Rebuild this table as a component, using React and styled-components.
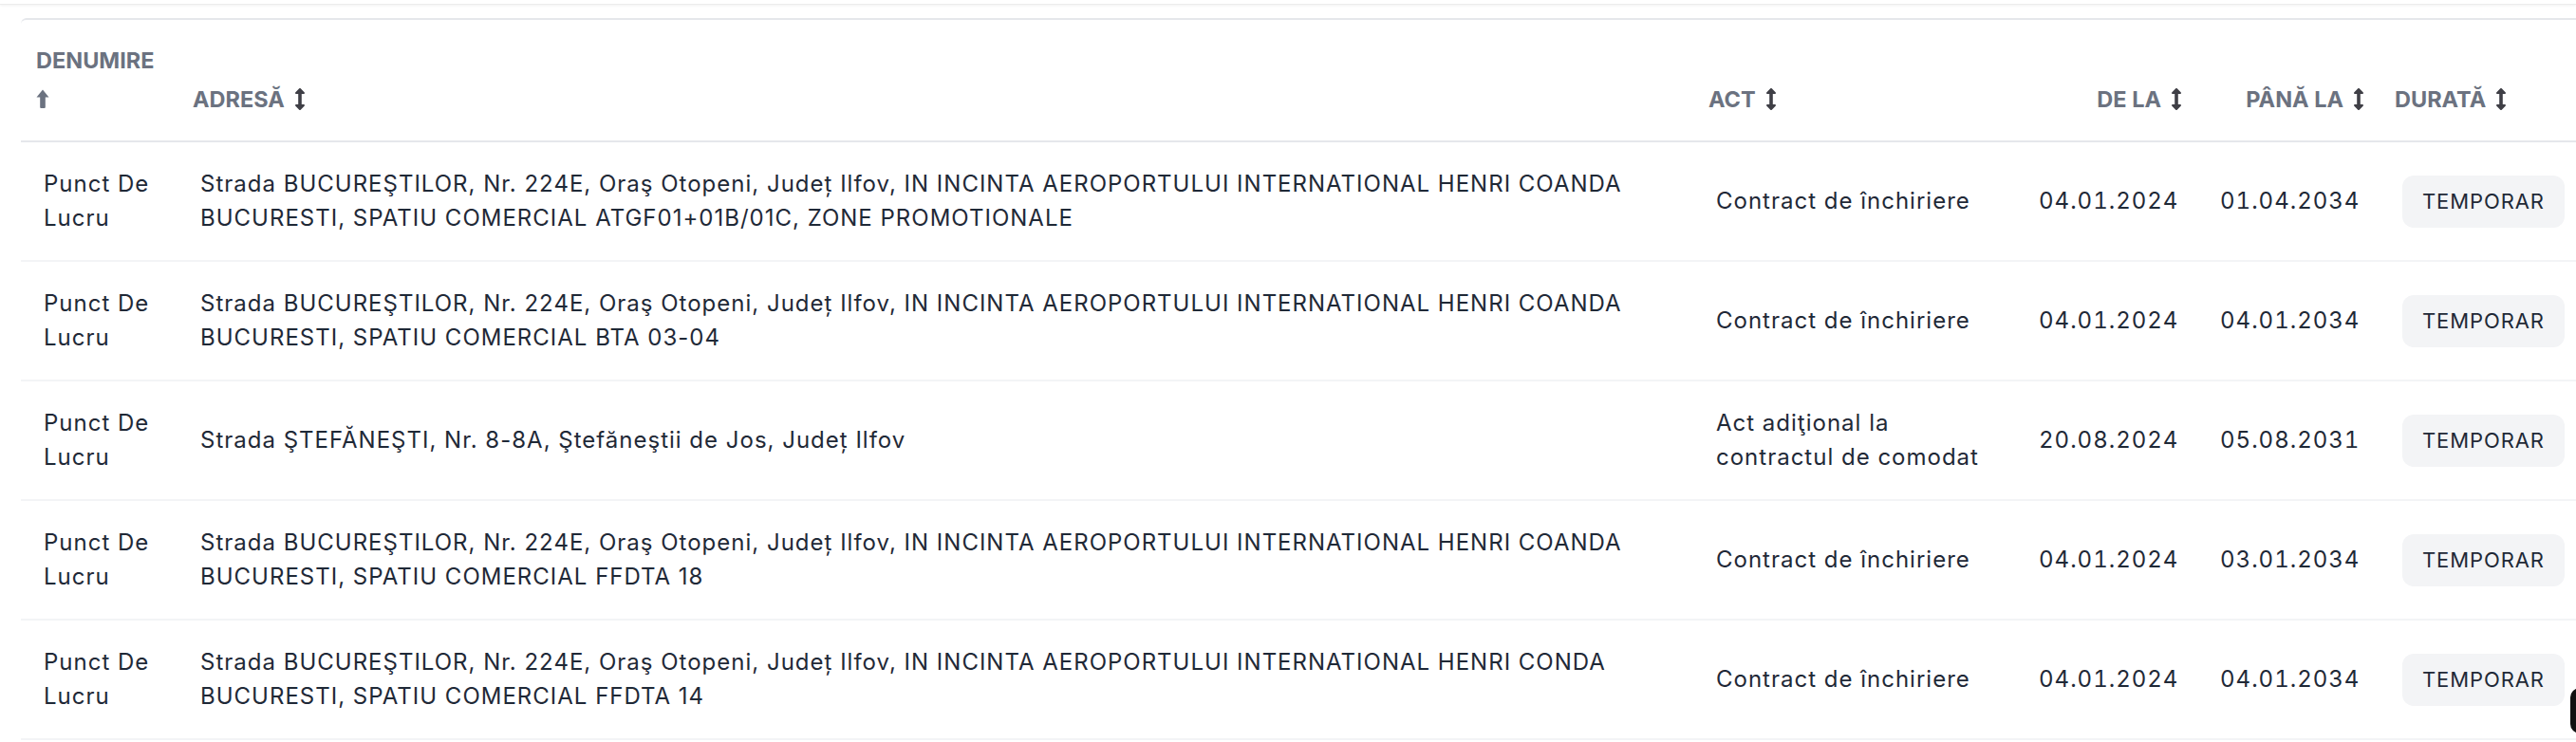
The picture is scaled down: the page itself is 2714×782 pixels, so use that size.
import React from 'react';
import styled, { createGlobalStyle } from 'styled-components';
import { FaArrowsAltV } from 'react-icons/fa';

const Global = createGlobalStyle`
  html, body { margin: 0; padding: 0; background: #ffffff; overflow: hidden; }
  body { font-family: Inter, "Noto Sans", sans-serif; }
`;

const Page = styled.div`
  width: 2714px;
  height: 782px;
  overflow: hidden;
`;

const TopBar = styled.div`
  height: 4px;
  border-bottom: 1px solid #ececec;
  box-shadow: 0 1px 3px rgba(0, 0, 0, 0.06);
`;

const Card = styled.div`
  margin: 14px 0 0 22px;
  width: 2700px;
  border-top: 2px solid #e5e7eb;
  border-top-left-radius: 6px;
`;

const Table = styled.table`
  width: 2700px;
  table-layout: fixed;
  border-collapse: collapse;
`;

const Th = styled.th`
  padding: 22px 16px 23px;
  text-align: ${(p) => p.$align || 'left'};
  vertical-align: bottom;
  font-size: 23.5px;
  line-height: 41px;
  font-weight: 700;
  color: #6b7280;
  text-transform: uppercase;
  border-bottom: 2px solid #e5e7eb;
`;

const Td = styled.td`
  padding: 26px 24px;
  font-size: 24px;
  line-height: 36px;
  letter-spacing: 1px;
  color: #1f2937;
  text-align: ${(p) => p.$align || 'left'};
  vertical-align: middle;
  border-bottom: 2px solid #f3f4f6;
  font-variant-numeric: ${(p) => (p.$num ? 'tabular-nums' : 'normal')};
`;

const Badge = styled.span`
  display: inline-flex;
  align-items: center;
  height: 55px;
  padding: 0 21px;
  border-radius: 12px;
  background: #f3f4f6;
  font-size: 22px;
  letter-spacing: 0.9px;
  color: #1f2937;
`;

const SortBoth = styled(FaArrowsAltV)`
  width: 12px;
  height: 23px;
  margin-left: 10px;
  vertical-align: -3px;
  color: #3f3f46;
`;

const UpSvg = styled.svg`
  width: 14px;
  height: 20px;
  vertical-align: -1px;
  color: #6b7280;
`;

const SortUp = () => (
  <UpSvg viewBox="0 0 14 20" aria-hidden="true">
    <path d="M7 0.5 L13.5 8.5 H9.8 V19 Q9.8 20 8.8 20 H5.2 Q4.2 20 4.2 19 V8.5 H0.5 Z" fill="currentColor" />
  </UpSvg>
);

const Widget = styled.div`
  position: fixed;
  left: 2708px;
  top: 725px;
  width: 60px;
  height: 48px;
  border-radius: 10px;
  background: #111111;
`;

const cols = [165, 1597, 340, 191, 192, 215];

const rows = [
  {
    name: 'Punct De Lucru',
    address:
      'Strada BUCUREŞTILOR, Nr. 224E, Oraş Otopeni, Județ Ilfov, IN INCINTA AEROPORTULUI INTERNATIONAL HENRI COANDA BUCURESTI, SPATIU COMERCIAL ATGF01+01B/01C, ZONE PROMOTIONALE',
    act: 'Contract de închiriere',
    from: '04.01.2024',
    to: '01.04.2034',
  },
  {
    name: 'Punct De Lucru',
    address:
      'Strada BUCUREŞTILOR, Nr. 224E, Oraş Otopeni, Județ Ilfov, IN INCINTA AEROPORTULUI INTERNATIONAL HENRI COANDA BUCURESTI, SPATIU COMERCIAL BTA 03-04',
    act: 'Contract de închiriere',
    from: '04.01.2024',
    to: '04.01.2034',
  },
  {
    name: 'Punct De Lucru',
    address: 'Strada ŞTEFĂNEŞTI, Nr. 8-8A, Ştefăneştii de Jos, Județ Ilfov',
    act: 'Act adiţional la contractul de comodat',
    from: '20.08.2024',
    to: '05.08.2031',
  },
  {
    name: 'Punct De Lucru',
    address:
      'Strada BUCUREŞTILOR, Nr. 224E, Oraş Otopeni, Județ Ilfov, IN INCINTA AEROPORTULUI INTERNATIONAL HENRI COANDA BUCURESTI, SPATIU COMERCIAL FFDTA 18',
    act: 'Contract de închiriere',
    from: '04.01.2024',
    to: '03.01.2034',
  },
  {
    name: 'Punct De Lucru',
    address:
      'Strada BUCUREŞTILOR, Nr. 224E, Oraş Otopeni, Județ Ilfov, IN INCINTA AEROPORTULUI INTERNATIONAL HENRI CONDA BUCURESTI, SPATIU COMERCIAL FFDTA 14',
    act: 'Contract de închiriere',
    from: '04.01.2024',
    to: '04.01.2034',
  },
];

export default function App() {
  return (
    <Page>
      <Global />
      <TopBar />
      <Card>
        <Table>
          <colgroup>
            {cols.map((w, i) => (
              <col key={i} style={{ width: w }} />
            ))}
          </colgroup>
          <thead>
            <tr>
              <Th>
                Denumire <SortUp />
              </Th>
              <Th>
                Adresă<SortBoth />
              </Th>
              <Th>
                Act<SortBoth />
              </Th>
              <Th $align="right">
                De la<SortBoth />
              </Th>
              <Th $align="right">
                Până la<SortBoth />
              </Th>
              <Th>
                Durată<SortBoth />
              </Th>
            </tr>
          </thead>
          <tbody>
            {rows.map((r, i) => (
              <tr key={i}>
                <Td>{r.name}</Td>
                <Td>{r.address}</Td>
                <Td>{r.act}</Td>
                <Td $align="right" $num>
                  {r.from}
                </Td>
                <Td $align="right" $num>
                  {r.to}
                </Td>
                <Td>
                  <Badge>TEMPORAR</Badge>
                </Td>
              </tr>
            ))}
          </tbody>
        </Table>
      </Card>
      <Widget />
    </Page>
  );
}
